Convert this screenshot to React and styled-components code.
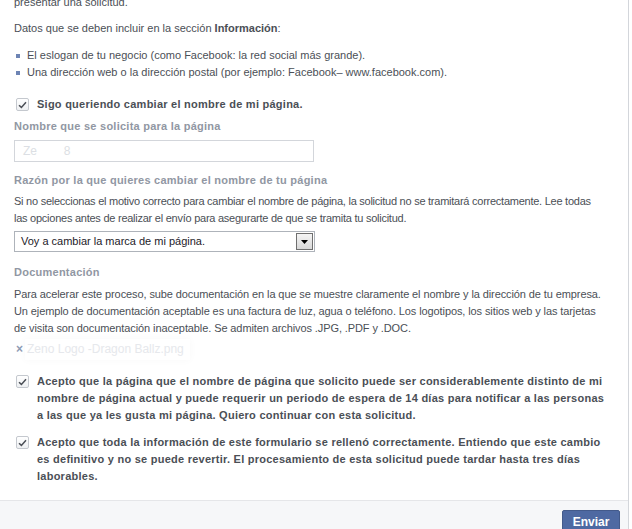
import styled, { createGlobalStyle } from 'styled-components'

const GlobalStyle = createGlobalStyle`
  html, body {
    margin: 0;
    padding: 0;
    background: #fff;
    overflow: hidden;
  }
  body {
    font-family: 'Liberation Sans', Arial, Helvetica, sans-serif;
    font-size: 11px;
    color: #4b4f56;
  }
`

const Panel = styled.div`
  width: 629px;
  height: 529px;
  box-sizing: border-box;
  border-right: 1px solid #d3d6db;
  overflow: hidden;
`

const Body = styled.div`
  padding: 0 12px 0 14px;
  line-height: 17px;
`

const Paragraph = styled.p`
  margin: ${(p) => p.top || 0}px 0 0;
  line-height: 17px;
  letter-spacing: ${(p) => p.spacing || 0}px;
`

const BulletList = styled.ul`
  list-style: none;
  margin: 10px 0 0;
  padding: 0;
`

const BulletItem = styled.li`
  display: flex;
  align-items: center;
  gap: 7px;
  line-height: 17px;

  &::before {
    content: '';
    width: 4px;
    height: 4px;
    margin-left: 2px;
    background: #6d84b4;
    flex-shrink: 0;
  }
`

const CheckRow = styled.label`
  display: flex;
  align-items: flex-start;
  gap: 8px;
  margin-top: ${(p) => p.top || 0}px;
  padding-left: 2px;
  font-weight: bold;
  line-height: 17px;
  letter-spacing: 0.25px;
`

const CheckText = styled.span`
  flex: 1;
`

const Box = styled.span`
  width: 13px;
  height: 13px;
  margin-top: 2px;
  box-sizing: border-box;
  border: 1px solid #c4c8ce;
  border-radius: 2px;
  background: linear-gradient(#ffffff, #eef0f2);
  display: flex;
  align-items: center;
  justify-content: center;
  flex-shrink: 0;
`

const FieldLabel = styled.div`
  margin-top: ${(p) => p.top || 0}px;
  font-weight: bold;
  color: #9197a3;
  line-height: 17px;
  letter-spacing: 0.25px;
`

const TextInput = styled.div`
  width: 300px;
  height: 22px;
  margin-top: 5px;
  box-sizing: border-box;
  border: 1px solid #d3d6db;
  padding: 0 8px;
  display: flex;
  align-items: center;
  color: #dcdfe4;
  font-size: 12px;
`

const Select = styled.div`
  width: 301px;
  height: 21px;
  margin-top: 4px;
  box-sizing: border-box;
  border: 1px solid #aeb3ba;
  display: flex;
  align-items: center;
  justify-content: space-between;
  padding: 1px 1px 1px 6px;
  color: #1d2129;
  font-size: 11px;
`

const SelectButton = styled.span`
  width: 17px;
  height: 17px;
  box-sizing: border-box;
  border: 1px solid #6f6f6f;
  background: linear-gradient(#f4f4f4, #d8d8d8);
  display: flex;
  align-items: center;
  justify-content: center;
`

const FileRow = styled.div`
  display: flex;
  align-items: center;
  gap: 2px;
  margin-top: 2px;
  padding-left: 2px;
  line-height: 17px;
`

const RemoveMark = styled.span`
  color: #8d9bb5;
  font-weight: bold;
  font-size: 12px;
`

const FileName = styled.span`
  color: #e6e8ec;
  font-size: 12px;
  padding: 2px 6px 2px 2px;
  box-shadow: 0 0 8px rgba(0, 0, 0, 0.03);
`

const Footer = styled.div`
  margin-top: 15px;
  height: 40px;
  border-top: 1px solid #e5e6e9;
  background: #f6f7f9;
  display: flex;
  justify-content: flex-end;
  align-items: flex-start;
  padding: 9px 8px 0;
`

const SubmitButton = styled.button`
  width: 58px;
  height: 24px;
  border: 1px solid #435a8b;
  border-radius: 2px;
  background: #4e69a2;
  color: #fff;
  font-family: inherit;
  font-weight: bold;
  font-size: 12px;
  padding: 0;
`

const Check = () => (
  <Box>
    <svg width="9" height="8" viewBox="0 0 9 8">
      <path d="M1 4.2 L3.4 6.4 L8 1.2" fill="none" stroke="#4b4f56" strokeWidth="1.5" />
    </svg>
  </Box>
)

const App = () => (
  <Panel>
    <GlobalStyle />
    <Body>
      <Paragraph top={-6}>presentar una solicitud.</Paragraph>
      <Paragraph top={9}>
        Datos que se deben incluir en la sección <b>Información</b>:
      </Paragraph>
      <BulletList>
        <BulletItem>El eslogan de tu negocio (como Facebook: la red social más grande).</BulletItem>
        <BulletItem>Una dirección web o la dirección postal (por ejemplo: Facebook– www.facebook.com).</BulletItem>
      </BulletList>
      <CheckRow top={15}>
        <Check />
        <CheckText>Sigo queriendo cambiar el nombre de mi página.</CheckText>
      </CheckRow>
      <FieldLabel top={5}>Nombre que se solicita para la página</FieldLabel>
      <TextInput>Ze&nbsp;&nbsp;&nbsp;&nbsp;&nbsp;&nbsp;&nbsp;&nbsp;8</TextInput>
      <FieldLabel top={10}>Razón por la que quieres cambiar el nombre de tu página</FieldLabel>
      <Paragraph top={4} spacing={-0.25}>
        Si no seleccionas el motivo correcto para cambiar el nombre de página, la solicitud no se tramitará correctamente. Lee todas
        <br />
        las opciones antes de realizar el envío para asegurarte de que se tramita tu solicitud.
      </Paragraph>
      <Select>
        <span>Voy a cambiar la marca de mi página.</span>
        <SelectButton>
          <svg width="7" height="4" viewBox="0 0 7 4">
            <path d="M0 0 H7 L3.5 4 Z" fill="#000" />
          </svg>
        </SelectButton>
      </Select>
      <FieldLabel top={12}>Documentación</FieldLabel>
      <Paragraph top={5} spacing={-0.1}>
        Para acelerar este proceso, sube documentación en la que se muestre claramente el nombre y la dirección de tu empresa.
        <br />
        Un ejemplo de documentación aceptable es una factura de luz, agua o teléfono. Los logotipos, los sitios web y las tarjetas
        <br />
        de visita son documentación inaceptable. Se admiten archivos .JPG, .PDF y .DOC.
      </Paragraph>
      <FileRow>
        <RemoveMark>×</RemoveMark>
        <FileName>Zeno Logo -Dragon Ballz.png</FileName>
      </FileRow>
      <CheckRow top={13}>
        <Check />
        <CheckText>
          Acepto que la página que el nombre de página que solicito puede ser considerablemente distinto de mi
          <br />
          nombre de página actual y puede requerir un periodo de espera de 14 días para notificar a las personas
          <br />
          a las que ya les gusta mi página. Quiero continuar con esta solicitud.
        </CheckText>
      </CheckRow>
      <CheckRow top={10}>
        <Check />
        <CheckText>
          Acepto que toda la información de este formulario se rellenó correctamente. Entiendo que este cambio
          <br />
          es definitivo y no se puede revertir. El procesamiento de esta solicitud puede tardar hasta tres días
          <br />
          laborables.
        </CheckText>
      </CheckRow>
    </Body>
    <Footer>
      <SubmitButton>Enviar</SubmitButton>
    </Footer>
  </Panel>
)

export default App
